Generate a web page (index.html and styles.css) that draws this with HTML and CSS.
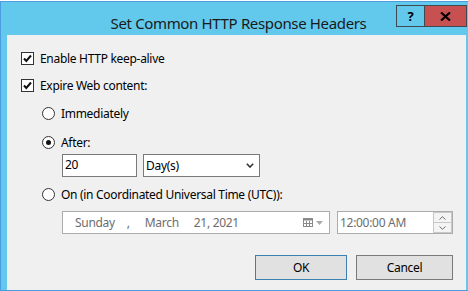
FILE: index.html
```html
<!DOCTYPE html>
<html>
<head>
<meta charset="utf-8">
<link rel="stylesheet" href="styles.css">
</head>
<body>
<div class="window">
  <div class="titlebar">
    <div class="title">Set Common HTTP Response Headers</div>
    <div class="caption-buttons">
      <div class="cap-help">?</div>
      <div class="cap-close"><svg width="11" height="9" viewBox="0 0 11 9"><path d="M1 0.5 L10 8.5 M10 0.5 L1 8.5" stroke="#000" stroke-width="2.2" fill="none"/></svg></div>
    </div>
  </div>
  <div class="content">
    <div class="row check-row first">
      <span class="checkbox"><svg width="11" height="11" viewBox="0 0 11 11"><path d="M2 5.5 L4.3 8 L9 2.5" stroke="#111" stroke-width="2" fill="none"/></svg></span>
      <span class="label">Enable HTTP keep-alive</span>
    </div>
    <div class="row check-row second">
      <span class="checkbox"><svg width="11" height="11" viewBox="0 0 11 11"><path d="M2 5.5 L4.3 8 L9 2.5" stroke="#111" stroke-width="2" fill="none"/></svg></span>
      <span class="label">Expire Web content:</span>
    </div>
    <div class="row radio-row r1">
      <span class="radio"></span>
      <span class="label">Immediately</span>
    </div>
    <div class="row radio-row r2">
      <span class="radio checked"><span class="dot"></span></span>
      <span class="label">After:</span>
    </div>
    <div class="row field-row">
      <div class="textbox">20</div>
      <div class="select"><span>Day(s)</span><svg width="8" height="5" viewBox="0 0 8 5"><path d="M0.8 0.8 L4 4 L7.2 0.8" stroke="#333" stroke-width="1.6" fill="none"/></svg></div>
    </div>
    <div class="row radio-row r3">
      <span class="radio"></span>
      <span class="label">On (in Coordinated Universal Time (UTC)):</span>
    </div>
    <div class="row picker-row">
      <div class="datepicker">
        <span class="d-day">Sunday</span>
        <span class="d-comma">,</span>
        <span class="d-month">March</span>
        <span class="d-date">21, 2021</span>
        <span class="d-icon">
          <svg width="10" height="9" viewBox="0 0 10 9"><rect x="0.5" y="0.5" width="9" height="8" fill="none" stroke="#8a8a8a"/><rect x="0.5" y="0.5" width="9" height="2" fill="#8a8a8a"/><path d="M3.5 3 V8.5 M6.5 3 V8.5 M0.5 5.5 H9.5" stroke="#8a8a8a" stroke-width="1"/></svg>
          <svg width="7" height="4" viewBox="0 0 7 4"><path d="M0 0 H7 L3.5 4 Z" fill="#ababab"/></svg>
        </span>
      </div>
      <div class="timepicker">
        <span class="t-text">12:00:00 AM</span>
        <span class="spin">
          <span class="spin-btn"><svg width="7" height="4" viewBox="0 0 7 4"><path d="M0.5 3.5 L3.5 0.7 L6.5 3.5" stroke="#6d6d6d" stroke-width="1" fill="none"/></svg></span>
          <span class="spin-btn"><svg width="7" height="4" viewBox="0 0 7 4"><path d="M0.5 0.5 L3.5 3.3 L6.5 0.5" stroke="#6d6d6d" stroke-width="1" fill="none"/></svg></span>
        </span>
      </div>
    </div>
    <div class="row button-row">
      <div class="button ok">OK</div>
      <div class="button cancel">Cancel</div>
    </div>
  </div>
</div>
</body>
</html>
```

FILE: styles.css
```css
* { box-sizing: border-box; }
html, body {
  margin: 0;
  padding: 0;
  background: #ffffff;
  width: 468px;
  height: 291px;
  overflow: hidden;
}
body {
  font-family: "Noto Sans", "Open Sans", sans-serif;
  font-size: 12px;
  letter-spacing: -0.3px;
  color: #000;
}
.window {
  margin-top: 1px;
  width: 468px;
  height: 290px;
  border-left: 1px solid #4b9de0;
  border-top: 1px solid #4b9de0;
  border-bottom: 1px solid #4b9de0;
  background: #62c9ec;
  padding: 0 2px 0 6px;
  display: flex;
  flex-direction: column;
}
.titlebar {
  height: 33px;
  margin: 0 -2px 0 -6px;
  display: grid;
  grid-template-areas: "a";
}
.title {
  grid-area: a;
  justify-self: center;
  align-self: start;
  margin-top: 11px;
  margin-left: 8px;
  font-size: 15px;
  letter-spacing: -0.35px;
  line-height: 20px;
  color: #1a1a1a;
}
.caption-buttons {
  grid-area: a;
  justify-self: end;
  align-self: start;
  margin-top: 3px;
  margin-right: 1px;
  display: flex;
  border: 1px solid #3d4a52;
  height: 22px;
}
.cap-help {
  width: 28px;
  height: 20px;
  border-right: 1px solid #3d4a52;
  font-family: "Noto Sans", sans-serif;
  font-weight: bold;
  font-size: 13px;
  line-height: 20px;
  text-align: center;
  color: #000;
  letter-spacing: 0;
}
.cap-close {
  width: 41px;
  height: 20px;
  background: #c75050;
  display: flex;
  align-items: center;
  justify-content: center;
}
.content {
  flex: 1;
  background: #f0f0f0;
  padding: 17px 13px 0 14px;
  display: flex;
  flex-direction: column;
}
.row {
  display: flex;
  align-items: center;
}
.check-row, .radio-row { height: 13px; }
.second { margin-top: 14px; }
.r1 { margin-top: 15px; margin-left: 21px; }
.r2 { margin-top: 16px; margin-left: 21px; }
.r3 { margin-top: 11px; margin-left: 21px; }
.label {
  margin-left: 6px;
  line-height: 16px;
  white-space: nowrap;
}
.checkbox {
  width: 13px;
  height: 13px;
  border: 1px solid #333;
  background: #fff;
  display: flex;
  align-items: center;
  justify-content: center;
  flex: none;
}
.radio {
  width: 13px;
  height: 13px;
  border: 1px solid #333;
  border-radius: 50%;
  background: #fff;
  display: flex;
  align-items: center;
  justify-content: center;
  flex: none;
}
.dot {
  width: 5px;
  height: 5px;
  border-radius: 50%;
  background: #111;
}
.field-row {
  margin-top: 5px;
  margin-left: 41px;
  gap: 6px;
  height: 23px;
}
.textbox {
  width: 75px;
  height: 23px;
  border: 1px solid #7a7a7a;
  background: #fff;
  padding-left: 2px;
  line-height: 20px;
}
.select {
  width: 117px;
  height: 23px;
  border: 1px solid #7a7a7a;
  background: #fff;
  padding: 0 5px 0 2px;
  display: flex;
  align-items: center;
  justify-content: space-between;
  line-height: 20px;
}
.picker-row {
  margin-top: 10px;
  margin-left: 41px;
  gap: 7px;
  height: 23px;
}
.datepicker {
  width: 268px;
  height: 23px;
  border: 1px solid #acacac;
  background: #fff;
  color: #6d6d6d;
  display: flex;
  align-items: center;
  padding-left: 12px;
  line-height: 20px;
}
.d-comma { margin-left: 12px; }
.d-month { margin-left: 15px; }
.d-date { margin-left: 15px; }
.d-icon {
  margin-left: auto;
  margin-right: 6px;
  display: flex;
  align-items: center;
  gap: 3px;
}
.timepicker {
  width: 116px;
  height: 23px;
  border: 1px solid #acacac;
  background: #fff;
  color: #6d6d6d;
  display: flex;
  align-items: center;
  padding-left: 2px;
  line-height: 20px;
}
.spin {
  margin-left: auto;
  margin-right: 0;
  width: 19px;
  height: 21px;
  display: flex;
  flex-direction: column;
}
.spin-btn {
  flex: 1;
  border: 1px solid #c8c8c8;
  background: #f4f4f4;
  display: flex;
  align-items: center;
  justify-content: center;
}
.spin-btn + .spin-btn { border-top: none; }
.button-row {
  margin-top: 21px;
  justify-content: flex-end;
  gap: 9px;
}
.button {
  height: 25px;
  background: #e1e1e1;
  border: 1px solid #7a7a7a;
  display: flex;
  align-items: center;
  justify-content: center;
}
.ok { width: 92px; border-color: #3c7fb1; }
.cancel { width: 97px; }
```
